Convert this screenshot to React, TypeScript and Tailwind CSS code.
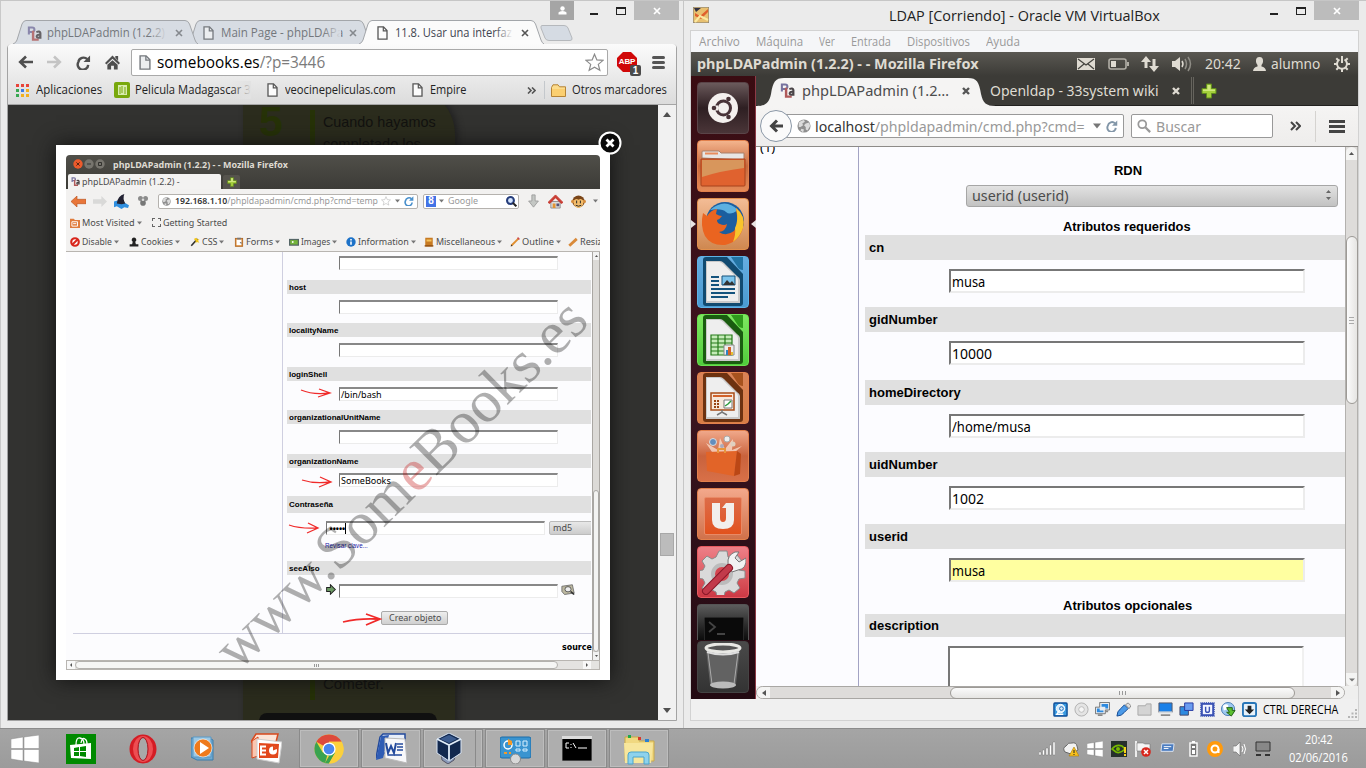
import React, { useLayoutEffect, useRef } from "react";

type P = { className?: string; children?: React.ReactNode };

/* Single-line label that stretches horizontally to fill the width of its box. */
function T({ className = "", children }: P) {
  const outer = useRef<HTMLSpanElement>(null);
  const inner = useRef<HTMLSpanElement>(null);
  useLayoutEffect(() => {
    const o = outer.current;
    const i = inner.current;
    if (!o || !i) return;
    i.style.transform = "";
    i.style.transform = `scaleX(${o.clientWidth / i.offsetWidth})`;
  }, [children]);
  return (
    <span ref={outer} className={`block shrink-0 whitespace-nowrap ${className}`}>
      <span ref={inner} className="inline-block origin-left">{children}</span>
    </span>
  );
}

function I({ className = "", vb = "0 0 16 16", children }: P & { vb?: string }) {
  return (
    <svg className={`block shrink-0 ${className}`} viewBox={vb} fill="none" preserveAspectRatio="none">
      {children}
    </svg>
  );
}

const segoe = "font-['Open_Sans','Noto_Sans',sans-serif]";
const ubuntu = "font-['Noto_Sans','Open_Sans',sans-serif]";
const arial = "font-['Liberation_Sans',Arial,sans-serif]";

const Pla = ({ className = "" }: P) => (
  <I className={className}>
    <path d="M2 9V1.500h3.500a2.200 2.200 0 010 4.800H2" stroke="#77739f" strokeWidth="2.200" />
    <path d="M6.500 5v9.500h6" stroke="#b05a5a" strokeWidth="2.600" />
    <path d="M10 6.500q3.700-1.500 4.300 1V13.500M14 9.500c-4.500-.8-4.500 3-2 3 1 0 2-.5 2-1.500" stroke="#4b4548" strokeWidth="2.200" />
  </I>
);
const FileI = ({ className = "", dim = false }: P & { dim?: boolean }) => (
  <I className={className} vb="0 0 11 14">
    <path d="M1 .8h5.500L10 4.500v8.700H1z" fill={dim ? "#eceef0" : "#fcfcfc"} stroke={dim ? "#75797e" : "#555"} strokeWidth="1.300" />
    <path d="M6.300 1v3.800H10" stroke={dim ? "#75797e" : "#555"} strokeWidth="1.200" />
  </I>
);
const XI = ({ className = "", c = "#777", w = 2 }: P & { c?: string; w?: number }) => (
  <I className={className} vb="0 0 8 8">
    <path d="M1 1l6 6M7 1L1 7" stroke={c} strokeWidth={w} />
  </I>
);
const Down = ({ className = "" }: P) => (
  <I className={className} vb="0 0 6 5"><path d="M0 .5h6L3 4.500z" fill="#777" /></I>
);
const Plus = ({ className = "" }: P) => (
  <I className={className}>
    <path d="M5.500 1h5v4.500H15v5h-4.500V15h-5v-4.500H1v-5h4.500z" fill="#a5cf3c" stroke="#5f8a1c" />
    <path d="M6.500 2h3v4.500H14v1.500H2V6.500h4.500z" fill="#cfe87c" />
  </I>
);
const Globe = ({ className = "" }: P) => (
  <I className={className}>
    <circle cx="8" cy="8" r="7.500" fill="#8f8f8f" />
    <path d="M2 4q3-3 6-3l1 2-3 2 1 2-3 2-2 0zM10 5l4-1 1 4-3 5-2-1 0-3-2-2zM5 11l3 1-1 3-3-2z" fill="#dcdcdc" />
  </I>
);
const Reload = ({ className = "", c = "#555" }: P & { c?: string }) => (
  <I className={className}>
    <path d="M13 10.500A5.600 5.600 0 112.500 7.500 5.600 5.600 0 0112 4.500" stroke={c} strokeWidth="2.600" />
    <path d="M15 .5v7H8z" fill={c} />
  </I>
);

function ChromeTab({ className = "", active = false, icon, children }: P & { active?: boolean; icon: React.ReactNode }) {
  return (
    <div className={`relative flex h-[24px] w-[185px] shrink-0 items-center pt-[2px] ${className}`}>
      <svg className="absolute inset-0 h-[24px] w-[185px]" viewBox="0 0 185 24" fill="none">
        <path
          d="M0 24Q3 23 4 20L9 4Q10.500.5 13 .5H172Q175 .5 176.500 4L182 20Q183 23 185 24"
          fill={active ? "#fbfbfb" : "#d7dce3"}
          stroke="#a3a6aa"
        />
      </svg>
      {icon}
      {children}
      <div className={`absolute left-[136px] top-[3px] h-[20px] w-[18px] bg-linear-to-r ${active ? "from-[#fbfbfb00] to-[#fbfbfb]" : "from-[#d7dce300] to-[#d7dce3]"}`} />
      <XI className="absolute left-[162px] top-[9px] size-[8px]" c={active ? "#555" : "#85898e"} w={1.600} />
    </div>
  );
}

function ChromeTop() {
  return (
    <>
      <div className="flex h-[19px] items-start justify-end pr-[4px]">
        <div className="flex h-[19px] w-[24px] items-center justify-center bg-[#a5a5a5]">
          <I className="size-[9px]" vb="0 0 9 9"><circle cx="4.500" cy="2.500" r="2.200" fill="#fff" /><path d="M.5 8.500v-2q1-1.500 4-1.500t4 1.500v2z" fill="#fff" /></I>
        </div>
        <div className="ml-[16px] mt-[12px] h-[2px] w-[8px] bg-[#222]" />
        <div className="ml-[18px] mt-[6px] h-[8px] w-[10px] border border-t-2 border-[#222]" />
        <div className="ml-[8px] flex h-[19px] w-[45px] items-center justify-center bg-[#bcbcbc]"><XI className="size-[8px]" c="#fff" w={1.700} /></div>
      </div>
      <div className="flex h-[24px] pl-[13px] text-[13px] text-[#73777c]">
        <ChromeTab className="z-10" icon={<Pla className="relative ml-[14px] size-[15px] opacity-80" />}><T className="relative ml-[5px] w-[118px]">phpLDAPadmin (1.2.2)</T></ChromeTab>
        <ChromeTab className="-ml-[11px]" icon={<FileI dim className="relative ml-[16px] h-[14px] w-[11px]" />}><T className="relative ml-[7px] w-[122px]">Main Page - phpLDAPa</T></ChromeTab>
        <ChromeTab active className="z-20 -ml-[13px] text-[#3e4450]" icon={<FileI className="relative ml-[18px] h-[14px] w-[11px]" />}><T className="relative ml-[7px] w-[117px]">11.8. Usar una interfaz</T></ChromeTab>
        <svg className="-ml-[4px] mt-[5px] h-[16px] w-[33px]" viewBox="0 0 33 16" fill="none"><path d="M2 .5H24Q27 .5 28 3L32 13Q32.500 15.500 30 15.500H9Q6 15.500 5 13L1 3Q.5 .5 2 .5" fill="#d5dbe3" stroke="#b5b8bc" /></svg>
      </div>
    </>
  );
}

function ChromeBars() {
  return (
    <div className="flex h-[61px] flex-col rounded-t-[3px] border-b border-[#a5a5a5] bg-linear-to-b from-[#fbfbfb] to-[#dcdcdc]">
      <div className="flex h-[36px] items-center pl-[10px]">
        <I className="h-[14px] w-[15px]" vb="0 0 15 14"><path d="M15 7H3M8 1.500L2.200 7 8 12.500" stroke="#4f4f4f" strokeWidth="2.600" /></I>
        <I className="ml-[14px] h-[14px] w-[15px]" vb="0 0 15 14"><path d="M0 7h12M7 1.500L12.800 7 7 12.500" stroke="#c4c4c4" strokeWidth="2.600" /></I>
        <Reload className="ml-[14px] size-[15px]" c="#4f4f4f" />
        <I className="ml-[14px] size-[15px]"><path d="M8 .5L16 8.500 14.500 10 8 4 1.500 10 0 8.500zM11 1h3v5l-3-3zM2.500 10.500L8 5.500l5.500 5V15.500H9.500v-4h-3v4h-4z" fill="#4f4f4f" /></I>
        <div className="ml-[11px] flex h-[27px] w-[477px] shrink-0 items-center rounded-[2px] border border-[#a9a9a9] bg-white">
          <FileI dim className="ml-[7px] h-[15px] w-[12px]" />
          <T className="ml-[6px] w-[168px] text-[17px] text-black">somebooks.es<span className="text-[#7b7b7b]">/?p=3446</span></T>
          <I className="ml-[260px] size-[19px]"><path d="M8 1l2 4.800 5.200.4-4 3.400 1.300 5L8 11.900 3.500 14.600l1.300-5-4-3.400L6 5.800z" fill="#fff" stroke="#8b8b8b" /></I>
        </div>
        <div className="relative ml-[9px] size-[20px] shrink-0">
          <I className="size-[20px]" vb="0 0 20 20"><path d="M6 0h8l6 6v8l-6 6H6l-6-6V6z" fill="#d00808" /></I>
          <span className={`absolute inset-0 flex items-center justify-center ${arial} text-[8px] font-bold tracking-tight text-white`}>ABP</span>
          <span className={`absolute left-[13px] top-[13px] flex h-[11px] w-[11px] items-center justify-center rounded-[2px] bg-[#4a4a4a] ${arial} text-[10px] font-bold text-white`}>1</span>
        </div>
        <div className="ml-[15px] flex flex-col gap-[2px]">
          <div className="h-[3px] w-[13px] rounded-sm bg-[#555]" /><div className="h-[3px] w-[13px] rounded-sm bg-[#555]" /><div className="h-[3px] w-[13px] rounded-sm bg-[#555]" />
        </div>
      </div>
      <div className="flex h-[20px] items-center pl-[8px] text-[12.500px] text-[#222]">
        <I className="size-[13px]" vb="0 0 13 13">
          <path d="M0 0h3v3H0zM10 0h3v3h-3zM5 0h3v3H5z" fill="#e8443a" /><path d="M0 5h3v3H0zM0 10h3v3H0z" fill="#39a852" /><path d="M5 5h3v3H5z" fill="#3c7de6" /><path d="M10 5h3v3h-3zM10 10h3v3h-3zM5 10h3v3H5z" fill="#f2b01e" />
        </I>
        <T className="ml-[7px] w-[66px]">Aplicaciones</T>
        <I className="ml-[12px] size-[16px]"><rect width="16" height="16" rx="2" fill="#78a80c" /><path d="M4 3h9v10H4z" fill="#d8ecae" /><path d="M6 5v7M8 4v7M11 5v7M2 3v10" stroke="#78a80c" /></I>
        <div className="relative ml-[5px]"><T className="w-[116px]">Pelicula Madagascar 3</T><div className="absolute right-0 top-0 h-full w-[20px] bg-linear-to-r from-[#e2e2e200] to-[#e2e2e2]" /></div>
        <FileI className="ml-[16px] h-[14px] w-[11px]" />
        <T className="ml-[7px] w-[111px]">veocinepeliculas.com</T>
        <FileI className="ml-[16px] h-[14px] w-[11px]" />
        <T className="ml-[7px] w-[36px]">Empire</T>
        <I className="ml-[61px] h-[7px] w-[9px]" vb="0 0 9 7"><path d="M1 .5l3 3-3 3M5 .5l3 3-3 3" stroke="#555" strokeWidth="1.600" /></I>
        <div className="ml-[8px] h-[18px] w-px bg-[#c4c8cc]" />
        <I className="ml-[6px] h-[13px] w-[15px]" vb="0 0 15 13"><path d="M.5 12.500V3.500L2 .8h5l1.500 2H14.500v9.700z" fill="#fcdc8c" stroke="#b58436" /><path d="M1 5h13v7H1z" fill="#fbcf70" /></I>
        <T className="ml-[6px] w-[95px]">Otros marcadores</T>
      </div>
    </div>
  );
}

/* ---------- picture shown in the lightbox ---------- */

function Field({ gap, label, mt, value, tall }: { gap: string; label: string; mt: string; value?: string; tall?: boolean }) {
  return (
    <>
      <div className={`${gap} ${tall ? "h-[17px]" : "h-[14px] pt-[2px]"} flex w-[304px] shrink-0 items-center bg-[#e0e0e0] pl-[2px] ${arial} text-[8px] font-bold text-black`}>{label}</div>
      {mt && <MiniInput className={`ml-[52px] ${mt}`}>{value}</MiniInput>}
    </>
  );
}
function MiniInput({ className = "", children }: P) {
  return (
    <div className={`flex h-[14px] w-[219px] shrink-0 items-center border border-[#ececec] border-l-[#777] border-t-2 border-t-[#888] bg-white pl-px text-[9px] leading-none text-black ${className}`}>
      {children}
    </div>
  );
}
const dev: [string, string, string, React.ReactNode][] = [
  ["Disable", "w-[30px]", "w-[59px]", <g key="a"><circle cx="8" cy="8" r="6" stroke="#d8261c" strokeWidth="3.500" fill="#fff" /><path d="M12 4L4 12" stroke="#d8261c" strokeWidth="3" /></g>],
  ["Cookies", "w-[32px]", "w-[61px]", <path key="b" d="M8 1a3.500 3.500 0 012 6.500l1 4H15V15H1v-3.500h4l1-4A3.500 3.500 0 018 1z" fill="#222" />],
  ["CSS", "w-[15px]", "w-[44px]", <g key="c"><path d="M2 14L12 3" stroke="#333" strokeWidth="2.500" /><path d="M10 1l2 3 3-1-2 3 2 3-4-1-2 2V6L6 3z" fill="#f0c419" /></g>],
  ["Forms", "w-[27px]", "w-[55px]", <g key="d"><rect x="2" y="2" width="12" height="13" fill="#d9822b" stroke="#a55a14" /><path d="M4 4h8v9H4z" fill="#fff" /><path d="M5 1h6v3H5zM9 8h3v4z" fill="#777" /></g>],
  ["Images", "w-[29px]", "w-[57px]", <g key="e"><rect y="3" width="16" height="11" fill="#566" /><rect x="2" y="5" width="12" height="7" fill="#74b43a" /><circle cx="6" cy="8" r="1.500" fill="#fff" /></g>],
  ["Information", "w-[51px]", "w-[78px]", <g key="f"><circle cx="8" cy="8" r="7.500" fill="#1d72c8" /><path d="M8 7v5.500M8 3v2.500" stroke="#fff" strokeWidth="2.500" /></g>],
  ["Miscellaneous", "w-[59px]", "w-[86px]", <g key="g"><path d="M2 1h12v14H2z" fill="#c77a22" /><path d="M4 4h8v3H4z" fill="#f5c25b" /><path d="M1 13h14v2H1z" fill="#8a4b12" /></g>],
  ["Outline", "w-[32px]", "w-[58px]", <g key="h"><path d="M2 14L13 3" stroke="#e08e2e" strokeWidth="3" /><path d="M12 1l3 3" stroke="#cc4a4a" strokeWidth="2.500" /><path d="M1 15l1-3 2 2z" fill="#333" /></g>],
  ["Resize", "w-[27px]", "w-[60px]", <path key="i" d="M2 14L14 3" stroke="#d98a3a" strokeWidth="4.500" />],
];

function Shot() {
  return (
    <div className={`relative flex h-[515px] w-[534px] flex-col overflow-hidden rounded-t-[4px] bg-[#fcfcfe] ${ubuntu} text-[9.500px] leading-none text-[#4c4c4c]`}>
      <div className="h-[34px] shrink-0 bg-linear-to-b from-[#504f49] to-[#3c3b37]">
        <div className="flex h-[18px] items-center gap-[1px] pl-[7px]">
          <I className="size-[10px]" vb="0 0 10 10"><circle cx="5" cy="5" r="4.700" fill="#ec5a2c" /><path d="M3.400 3.400l3.200 3.200m0-3.200L3.400 6.600" stroke="#5a2410" /></I>
          <I className="size-[10px]" vb="0 0 10 10"><circle cx="5" cy="5" r="4.700" fill="#77756e" /><path d="M3 5h4" stroke="#33322e" /></I>
          <I className="size-[10px]" vb="0 0 10 10"><circle cx="5" cy="5" r="4.700" fill="#77756e" /><path d="M3.500 3.500h3v3h-3z" stroke="#33322e" /></I>
          <T className="ml-[7px] w-[175px] text-[9px] font-bold text-[#dfdbd2]">phpLDAPadmin (1.2.2) - - Mozilla Firefox</T>
        </div>
        <div className="flex h-[16px] items-end gap-[2px] pl-[2px]">
          <div className="flex h-[15px] w-[153px] items-center rounded-t-[2px] bg-[#f3f2f1] pl-[3px]"><Pla className="size-[9px]" /><T className="ml-[2px] w-[98px]">phpLDAPadmin (1.2.2) -</T></div>
          <div className="flex h-[14px] w-[17px] items-center justify-center rounded-t-[2px] bg-[#55534d]"><Plus className="size-[10px]" /></div>
        </div>
      </div>
      <div className="flex h-[24px] shrink-0 items-center bg-[#f2f1f0] pl-[5px]">
        <I className="h-[11px] w-[15px]" vb="0 0 15 10"><path d="M0 5l6-5v3h9v4H6v3z" fill="#e8763a" stroke="#b9511c" strokeWidth=".6" /></I>
        <I className="ml-[7px] h-[11px] w-[14px]" vb="0 0 15 10"><path d="M15 5L9 0v3H0v4h9v3z" fill="#d9d9d8" /></I>
        <I className="ml-[7px] size-[15px]"><path d="M0 8l4-1 4 3 3-1 5 3-1 3-4-1-3 2-5-3-3 1z" fill="#2f8fe0" /><path d="M3 10Q4 2 11 0q-2 5 1 10l-4 1z" fill="#223" /></I>
        <I className="ml-[9px] size-[10px]"><circle cx="4" cy="4" r="4" fill="#8b8b8b" /><circle cx="12" cy="4" r="4" fill="#8b8b8b" /><circle cx="8" cy="11" r="4.500" fill="#777" /><circle cx="8" cy="6" r="2" fill="#ddd" /></I>
        <div className="ml-[10px] flex h-[15px] w-[260px] shrink-0 items-center rounded-[2px] border border-[#b5b2ae] bg-white">
          <Globe className="ml-[3px] size-[9px]" />
          <T className="ml-[4px] w-[203px] text-[#999]"><b className="font-semibold text-[#333]">192.168.1.10</b>/phpldapadmin/cmd.php?cmd=temp</T>
          <I className="ml-[3px] size-[10px]"><path d="M8 1l2 4.800 5.200.4-4 3.400 1.300 5L8 11.900 3.500 14.600l1.300-5-4-3.400L6 5.800z" stroke="#bbb" /></I>
          <Down className="ml-[4px] h-[4px] w-[5px]" />
          <Reload className="ml-[4px] size-[10px]" c="#4a90cc" />
        </div>
        <div className="ml-[5px] flex h-[15px] w-[96px] shrink-0 items-center rounded-[2px] border border-[#b5b2ae] bg-white">
          <div className={`flex h-[11px] w-[10px] items-center justify-center bg-[#4373e6] ${arial} ml-[2px] text-[10px] font-bold text-white`}>8</div>
          <Down className="ml-[3px] h-[4px] w-[5px]" />
          <T className="ml-[4px] w-[30px] text-[#999]">Google</T>
          <I className="ml-[28px] size-[11px]"><circle cx="6.500" cy="6.500" r="5" fill="#d5e6ff" stroke="#253c7a" strokeWidth="3" /><path d="M10 10l5 5" stroke="#222" strokeWidth="3" /></I>
        </div>
        <I className="ml-[8px] h-[14px] w-[13px]"><path d="M6 1h4v7h4l-6 7-6-7h4z" fill="#c4c7c4" stroke="#999" /></I>
        <I className="ml-[8px] size-[15px]"><path d="M3 8h10v7H3z" fill="#ddd" stroke="#555" strokeWidth=".6" /><path d="M0 9l8-8 8 8-2 1-6-6-6 6z" fill="#c93c32" stroke="#c93c32" /><path d="M5 10h3v5H5z" fill="#e39433" /><path d="M9 10h3v3H9z" fill="#557" /></I>
        <I className="ml-[8px] size-[15px]"><circle cx="8" cy="8" r="6.500" fill="#7a4518" /><circle cx="1.800" cy="8" r="1.800" fill="#d68c3c" /><circle cx="14.200" cy="8" r="1.800" fill="#d68c3c" /><path d="M3 7q2-3 5-1 3-2 5 1v4q-2 4-5 4t-5-4z" fill="#f3bd6c" /><path d="M6 7v3M10 7v3M5 12q3 2 6 0" stroke="#222" /></I>
        <Down className="ml-[7px] h-[4px] w-[5px]" />
      </div>
      <div className="flex h-[19px] shrink-0 items-center bg-[#f2f1f0] pl-[4px]">
        <I className="size-[10px]"><path d="M0 1h6l2 2h8v13H0z" fill="#e07c3c" /><path d="M3 6h9v7H3zM5 9h5" stroke="#fff" strokeWidth="1.500" /></I>
        <T className="ml-[2px] w-[53px]">Most Visited</T><Down className="ml-[2px] h-[4px] w-[5px]" />
        <div className="ml-[10px] size-[9px] border border-dashed border-[#666]" /><T className="ml-[2px] w-[64px]">Getting Started</T>
      </div>
      <div className="flex h-[20px] shrink-0 items-center border-b border-[#b8b5b1] bg-[#f2f1f0] pl-[4px]">
        {dev.map(([name, w, total, icon]) => (
          <div key={name} className={`flex shrink-0 items-center ${total}`}><I className="size-[10px]">{icon}</I><T className={`ml-[2px] ${w}`}>{name}</T><Down className="ml-[2px] h-[4px] w-[5px]" /></div>
        ))}
      </div>
      <div className="flex h-[408px] shrink-0">
        <div className="flex min-w-0 flex-1 flex-col">
          <div className="ml-[7px] flex h-[382px] shrink-0 border-b border-[#cfcfe0]">
            <div className="w-[210px] shrink-0 border-r border-[#cfcfe0]" />
            <div className="flex w-[308px] flex-col overflow-hidden pl-[4px]">
              <MiniInput className="ml-[52px] mt-[4px]" />
              <Field gap="mt-[10px]" label="host" mt="mt-[6px]" />
              <Field gap="mt-[9px]" label="localityName" mt="mt-[6px]" />
              <Field gap="mt-[10px]" label="loginShell" mt="mt-[6px]" value="/bin/bash" />
              <Field gap="mt-[9px]" label="organizationalUnitName" mt="mt-[6px]" />
              <Field gap="mt-[10px]" label="organizationName" mt="mt-[5px]" value="SomeBooks" />
              <Field gap="mt-[9px]" label="Contraseña" mt="" tall />
              <div className="ml-[39px] mt-[8px] flex">
                <MiniInput><span className="border-r border-black pl-px text-[11px] tracking-[-1px]">•••••</span></MiniInput>
                <div className="ml-[4px] flex h-[14px] w-[48px] shrink-0 items-center rounded-[2px] border border-[#bbb] bg-linear-to-b from-[#e8e8e8] to-[#ccc] pl-[3px]"><T className="w-[19px]">md5</T></div>
              </div>
              <T className={`ml-[38px] mt-[7px] w-[43px] ${arial} text-[7px] text-[#1a1aa6]`}>Revisar clave...</T>
              <Field gap="mt-[12px]" label="seeAlso" mt="" />
              <div className="mt-[6px] flex items-center pl-[39px]">
                <I className="h-[11px] w-[10px]"><path d="M1 5h6V1l8 7-8 7v-4H1z" fill="#6c9a64" stroke="#222" strokeWidth="1.500" /></I>
                <MiniInput className="mx-[3px] mt-[3px]" />
                <I className="h-[12px] w-[14px]"><path d="M1 3l12-2 2 11-11 2-3-4z" fill="#bcb8a0" stroke="#666" /><circle cx="8" cy="7" r="3.500" fill="#eee" stroke="#444" /><path d="M11 10l4 4" stroke="#333" strokeWidth="2" /></I>
              </div>
              <div className="ml-[94px] mt-[13px] flex h-[14px] w-[67px] shrink-0 items-center justify-center rounded-[2px] border border-[#aaa] bg-linear-to-b from-[#eee] to-[#d0d0d0]"><T className="w-[52px]">Crear objeto</T></div>
            </div>
          </div>
          <T className="ml-[496px] mt-[9px] w-[30px] font-['DejaVu_Sans',sans-serif] text-[9px] font-bold text-black">source</T>
        </div>
        <div className="flex w-[8px] shrink-0 flex-col border-x border-[#aaa7a3] bg-[#dcdad7]"><div className="flex h-[8px] shrink-0 items-center justify-center bg-[#f2f2f2]"><I className="h-[2px] w-[3px]" vb="0 0 6 4"><path d="M0 4l3-4 3 4z" fill="#555" /></I></div><div className="mt-[230px] h-[162px] shrink-0 rounded-full border border-[#a9a7a4] bg-[#f3f3f2]" /><div className="flex flex-1 items-center justify-center bg-[#f2f2f2]"><I className="h-[2px] w-[3px]" vb="0 0 6 4"><path d="M0 0l3 4 3-4z" fill="#555" /></I></div></div>
      </div>
      <div className="flex h-[10px] shrink-0 items-center border border-[#b8b5b1] bg-[#e4e3e1]">
        <div className="flex size-[8px] items-center justify-center bg-[#f8f8f8]"><I className="h-[4px] w-[2px]" vb="0 0 4 6"><path d="M4 0v6L0 3z" fill="#555" /></I></div>
        <div className="flex h-[8px] w-[483px] items-center justify-center gap-px rounded-full border border-[#b3b1ae] bg-[#f6f6f5]"><i className="h-[3px] w-px bg-[#999]" /><i className="h-[3px] w-px bg-[#999]" /><i className="h-[3px] w-px bg-[#999]" /></div>
        <div className="ml-[25px] flex size-[8px] items-center justify-center bg-[#f8f8f8]"><I className="h-[4px] w-[2px]" vb="0 0 4 6"><path d="M0 0v6l4-3z" fill="#555" /></I></div>
      </div>
      <svg className="absolute inset-0 h-[515px] w-[534px]" viewBox="0 0 534 515" fill="none" stroke="#f02a2a" strokeWidth="1.300">
        <path d="M235 235q12 5 28 3M253 234l11 4-12 4" /><path d="M236 325q12 4 28 2M254 322l11 5-12 5" /><path d="M223 370q12 4 28 3M242 368l10 5-11 5" /><path d="M277 467q16-4 35-3M300 459l14 5-14 6" strokeWidth="1.800" />
      </svg>
      <div className="absolute left-[177px] top-[468px] origin-bottom-left -rotate-[44.700deg] whitespace-nowrap font-['Liberation_Serif',serif] text-[60px] leading-[54px] text-[#00000050]">www.Som<span className="text-[#c0000050]">e</span>Books.es</div>
    </div>
  );
}

function Chrome() {
  return (
    <div className={`flex w-[683px] shrink-0 flex-col border-t border-[#c6c6c6] bg-[#ebebeb] ${segoe}`}>
      <div className="flex h-full flex-col border-l border-[#c9c9c9]">
        <div className="-ml-px"><ChromeTop /></div>
        <div className="ml-[6px] flex h-[677px] w-[670px] flex-col rounded-t-[4px] border border-[#a3a3a3]">
          <div className="-mt-px"><ChromeBars /></div>
          <div className="flex min-h-0 flex-1">
            <div className={`relative w-[650px] shrink-0 overflow-hidden bg-[#323230] ${arial}`}>
              <div className="absolute -top-[20px] left-[235px] h-[640px] w-[212px] rounded-tr-[50px] bg-[#2b2c1d] shadow-[3px_0_6px_#222]">
                <div className="absolute left-[16px] top-[11px] text-[43px] font-bold leading-[50px] text-[#263207]">5</div>
                <div className="absolute left-[67px] top-[25px] h-[590px] w-[5px] bg-[#263207]" />
                <div className="absolute left-[80px] top-[26px] text-[15px] leading-[22px] text-[#121210]"><T className="w-[113px]">Cuando hayamos</T><T className="w-[98px]">completado los</T></div>
                <div className="absolute left-[80px] top-[590px] text-[15px] leading-[18px] text-[#121210]">Cometer.</div>
                <div className="absolute left-[16px] top-[628px] h-[20px] w-[178px] rounded-t-[8px] bg-[#101010]" />
              </div>
              <div className="absolute left-[48px] top-[40px] h-[535px] w-[554px] bg-white p-[10px] shadow-[0_0_20px_#111]"><Shot /></div>
              <I className="absolute left-[590px] top-[26px] size-[24px]" vb="0 0 24 24"><circle cx="12" cy="12" r="10.500" fill="#0a0a0a" stroke="#fff" strokeWidth="2" /><path d="M8.500 8.500l7 7m0-7l-7 7" stroke="#fff" strokeWidth="2.800" /></I>
            </div>
            <div className="flex flex-1 flex-col items-center bg-[#f1f1f1]">
              <I className="mt-[7px] h-[5px] w-[8px]" vb="0 0 8 5"><path d="M0 5l4-5 4 5z" fill="#505050" /></I>
              <div className="mt-[416px] h-[23px] w-[14px] border border-[#a8a8a8] bg-[#bcbcbc]" />
              <I className="mb-[7px] mt-auto h-[5px] w-[8px]" vb="0 0 8 5"><path d="M0 0l4 5 4-5z" fill="#505050" /></I>
            </div>
          </div>
        </div>
      </div>
    </div>
  );
}

/* ---------- virtual machine window ---------- */

const tile = "relative flex h-[52px] w-[52px] shrink-0 items-center justify-center rounded-[4px] border";
const Office = ({ d, l, children }: { d: string; l: string; children: React.ReactNode }) => (
  <I className="size-[50px]" vb="0 0 50 50">
    <path d="M5 3q0-3 3-3h21l16 17v29q0 3-3 3H8q-3 0-3-3z" fill={d} />
    <path d="M33 0h12v13q-4 0-6-4z" fill={l} />
    <path d="M8 4h14q2 0 4 2l13 13q3 2 3 4v23H8z" fill="#c9c9c9" /><path d="M9 5h12q2 0 4 2l12 12q3 2 3 4v21H9z" fill="#eeeeee" />
    {children}
  </I>
);

function Launcher() {
  return (
    <div className="flex h-[623px] w-[65px] shrink-0 flex-col items-center border-r border-[#8d3a46] bg-linear-to-b from-[#3a0c12] via-[#3c1520] to-[#230a12] pr-[1px] pt-[6px]">
      <div className="flex h-[558px] flex-col gap-[6px]">
        <div className={`${tile} border-[#5a4448] bg-linear-to-b from-[#6b5a5c] via-[#2e1f22] to-[#4a3538]`}>
          <I className="size-[32px]" vb="0 0 32 32"><circle cx="16" cy="16" r="15" fill="#f4f0ee" /><circle cx="16.500" cy="16" r="7" stroke="#493338" strokeWidth="3" /><path d="M6 16h5M21 9l2-4M21 23l2 4" stroke="#f4f0ee" strokeWidth="5" /><circle cx="7" cy="16" r="2.300" fill="#493338" /><circle cx="21.500" cy="7" r="2.300" fill="#493338" /><circle cx="21.500" cy="25" r="2.300" fill="#493338" /></I>
        </div>
        <div className={`${tile} border-[#e2804c] bg-linear-to-b from-[#f3b48d] via-[#c7683c] to-[#e58a57]`}>
          <I className="size-[46px]" vb="0 0 46 46"><path d="M2 15V9q0-1 1-1h16l2 2h23v7z" fill="#e8e6e4" stroke="#a9806a" /><path d="M5 10.500h13" stroke="#e88c5c" strokeWidth="2" /><path d="M1 16h44v26q0 1-1 1H2q-1 0-1-1z" fill="#e0622f" stroke="#a8431c" /><path d="M2 17h42v8Q20 28 2 34z" fill="#d8965c" /></I>
        </div>
        <div className={`${tile} border-[#e2904c] bg-linear-to-b from-[#f3bc95] to-[#cf8850]`}>
          <I className="size-[46px]" vb="0 0 46 46"><circle cx="25" cy="20" r="19" fill="#1b5e9f" /><path d="M10 9Q25-4 38 9q-8 6-12 2T10 9z" fill="#5cb0e0" /><path d="M36 7q10 8 7 20-4 14-18 17-14 1-20-9Q0 25 3 12l4 3q4-6 10-7l-1 5q3 2 6 2-2 3-5 4 0 3 3 4 4 2 7 0-1 7-8 8 7 5 15-1 5-6 2-23z" fill="#ea6420" /><path d="M36 7q10 8 7 20-3 9-10 14 3-8 2-14 4-8 1-20z" fill="#f8c42c" /></I>
          <I className="absolute -left-[7px] top-[20px] h-[10px] w-[6px]" vb="0 0 6 10"><path d="M0 1l5 4-5 4z" fill="#e8e4e4" /></I>
          <I className="absolute left-[52px] top-[20px] h-[10px] w-[6px]" vb="0 0 6 10"><path d="M6 1L1 5l5 4z" fill="#e8e4e4" /></I>
        </div>
        <div className={`${tile} border-[#5db3e6] bg-linear-to-b from-[#66ade0] to-[#4a9ad2]`}>
          <Office d="#114a70" l="#2273a3"><path d="M13 20h8M13 24h8M13 28h8M13 32h24M13 36h24M13 40h17" stroke="#14537d" strokeWidth="2" /><path d="M24 19h13v9H24z" fill="#7cc4ec" stroke="#14537d" /><path d="M25 28l4-5 3 3 2-2 3 4z" fill="#333" /></Office>
        </div>
        <div className={`${tile} border-[#6be050] bg-linear-to-b from-[#7ee860] to-[#50cc3c]`}>
          <Office d="#1a5c10" l="#2f9a1c"><path d="M13 20h21v20H13z" fill="#c5ebb8" /><path d="M13 20h21v20H13zM13 24h21M13 28h21M13 32h21M13 36h21M20 20v20M27 20v20" stroke="#247a18" strokeWidth="1.200" /><path d="M26 30h10v10H26z" fill="#eee" stroke="#888" /><path d="M28 35h2v5h-2z" fill="#2d83c4" /><path d="M30 32h3v8h-3z" fill="#d2622a" /><path d="M33 37h2v3h-2z" fill="#e8c030" /></Office>
        </div>
        <div className={`${tile} border-[#e2804c] bg-linear-to-b from-[#d98358] to-[#d87e46]`}>
          <Office d="#6d3210" l="#a6521e"><path d="M13 20h23v17H13z" fill="#f6e8dc" stroke="#a84c18" strokeWidth="1.500" /><path d="M15 23h19" stroke="#d2622a" strokeWidth="2" /><path d="M16 28h6M16 31h6M16 34h6" stroke="#9a4414" strokeWidth="2" strokeDasharray="2 1" /><path d="M26 27h8v8h-8z" fill="#fff" stroke="#777" /><path d="M27 33l3-2 3-3" stroke="#2a9a3a" strokeWidth="1.500" /><path d="M24 37v3M19 42l5-3 5 3" stroke="#777" strokeWidth="1.500" /></Office>
        </div>
        <div className={`${tile} border-[#e2804c] bg-linear-to-b from-[#f0a88a] via-[#c9623c] to-[#d87048]`}>
          <I className="size-[46px]" vb="0 0 46 46"><path d="M12 19L6 10l12 7 2-12 5 11 8-10-1 11 10-4-7 6z" fill="#ffe8d8" opacity=".7" /><circle cx="13" cy="9" r="3.500" fill="#638ebd" stroke="#ddd" /><circle cx="27" cy="6" r="3" fill="#eee" stroke="#aaa" /><circle cx="33" cy="11" r="2.500" fill="#e0d0c0" /><circle cx="22" cy="13" r="2" fill="#aab" /><path d="M6 19l31-1-3 25-27-5z" fill="#e26428" /><path d="M37 18l4 3-1 20-6 2z" fill="#bb4715" /><path d="M18 20v-4h7v4" stroke="#e8953c" strokeWidth="2" /></I>
        </div>
        <div className={`${tile} border-[#e2804c] bg-linear-to-b from-[#f3a88b] to-[#d0714a]`}>
          <div className="mt-[4px] flex size-[38px] items-center justify-center rounded-[2px] border border-[#e98a66] bg-linear-to-b from-[#dc6c48] to-[#e2521c]"><I className="h-[28px] w-[24px]" vb="0 0 24 28"><path d="M1 1h8v15q0 4 3 4t3-4V6h-4l4-5h8v17q0 9-11 9T1 18z" fill="#f2efec" /></I></div>
        </div>
        <div className={`${tile} border-[#e85a60] bg-linear-to-b from-[#ee8088] to-[#cc3844]`}>
          <I className="size-[46px]" vb="0 0 46 46"><path d="M19 2h8l1 6 4 2 5-4 5 6-4 5 1 4 6 1v7l-6 1-2 4 3 5-6 5-5-3-4 2-1 5h-7l-1-5-4-2-5 3-5-5 3-5-2-4-6-1v-7l6-1 2-4-3-5 5-5 5 3 4-2z" fill="#dadada" stroke="#8a8a8a" /><circle cx="22" cy="25" r="9" fill="#d54650" stroke="#bbb" strokeWidth="4" /><path d="M28 15q-1-9 7-12l4 0-4 6 4 4 7-4q1 11-8 12l-6 2z" fill="#f2f2f2" stroke="#777" /><path d="M6 42L29 19" stroke="#8a1828" strokeWidth="8" strokeLinecap="round" /><path d="M6 42L29 19" stroke="#c23a4a" strokeWidth="6" strokeLinecap="round" /></I>
        </div>
        <div className="relative h-[36px] w-[52px] shrink-0 overflow-hidden rounded-t-[4px] border border-b-0 border-[#555] bg-linear-to-b from-[#5c5c5c] to-[#0c0c0c] pl-[6px] pt-[12px]">
          <I className="h-[24px] w-[40px]" vb="0 0 40 24"><path d="M0 0h40v24H0z" fill="#0a0a0a" stroke="#444" /><path d="M5 5l6 5-6 5M13 17h8" stroke="#444" strokeWidth="1.800" /></I>
          <div />
        </div>
      </div>
      <div className="mt-px flex h-[52px] w-[52px] shrink-0 items-start justify-center rounded-[4px] border border-[#444] bg-linear-to-b from-[#4a4a4a] to-[#333]">
        <I className="mt-[1px] h-[46px] w-[38px]" vb="0 0 38 46"><path d="M2 6l4 35q13 7 26 0L36 6z" fill="#626262" /><path d="M4 10l4 31M34 10l-4 31" stroke="#aaa" /><ellipse cx="19" cy="42" rx="13" ry="3.500" fill="#bbb" /><ellipse cx="19" cy="5" rx="17" ry="4" fill="#555" stroke="#e8e8e4" strokeWidth="3" /><path d="M3 9q16 5 32 0" stroke="#ddd" strokeWidth="2" /></I>
      </div>
    </div>
  );
}

function Row({ label, gap, yellow }: { label: string; gap: string; yellow?: boolean }) {
  return (
    <>
      <div className={`${gap} flex h-[25px] shrink-0 items-center bg-[#e0e0e0] pl-[4px] ${arial} text-[13px] font-bold text-black`}>{label}</div>
      <div className={`ml-[84px] mt-[9px] flex h-[24px] w-[356px] shrink-0 items-center border-2 border-b-[#ececec] border-l-[#777] border-r-[#ececec] border-t-[#777] pl-[1px] text-[14px] text-black ${yellow ? "bg-[#ffffa0]" : "bg-white"}`}>
        {label === "cn" || label === "userid" ? <T className="w-[33px]">musa</T> : label === "gidNumber" ? <T className="w-[40px]">10000</T> : label === "uidNumber" ? <T className="w-[32px]">1002</T> : <T className="w-[79px]">/home/musa</T>}
      </div>
    </>
  );
}

function Firefox() {
  return (
    <div className="flex w-[602px] flex-col">
      <div className="relative flex h-[30px] shrink-0 items-center border-b border-[#22211f] bg-[#3c3b37] text-[15px] text-[#dfdbd2]">
        <svg className="absolute left-0 top-[1px] h-[29px] w-[242px]" viewBox="0 0 242 29"><path d="M0 29c10 0 13-3 15-12 2-12 4-16 13-16h184c9 0 11 4 13 16 2 9 5 12 15 12z" fill="#f5f4f3" /></svg>
        <Pla className="relative ml-[24px] size-[15px]" />
        <T className="relative ml-[7px] w-[147px] text-[#4c4c4c]">phpLDAPadmin (1.2…</T>
        <XI className="relative ml-[13px] size-[8px]" c="#555" w={2.400} />
        <T className="relative ml-[20px] w-[169px]">Openldap - 33system wiki</T>
        <XI className="ml-[13px] size-[8px]" c="#dfdbd2" w={2.400} />
        <div className="ml-[11px] h-[27px] w-[3px] border-x border-[#66645e]" />
        <Plus className="ml-[7px] size-[16px]" />
      </div>
      <div className="flex h-[41px] shrink-0 items-center border-b border-[#8d8b88] bg-linear-to-b from-[#f5f4f3] to-[#eeedec] pl-[4px] text-[15px]">
        <div className="z-10 flex size-[32px] shrink-0 items-center justify-center rounded-full border border-[#8a97a6] bg-[#fafafa]"><I className="size-[14px]" vb="0 0 14 14"><path d="M14 7H3M8 1.500L2.500 7 8 12.500" stroke="#444" strokeWidth="3" /></I></div>
        <div className="-ml-[8px] flex h-[24px] w-[340px] shrink-0 items-center rounded-[2px] border border-[#999] bg-white pl-[12px]">
          <Globe className="size-[14px]" />
          <T className="ml-[4px] w-[270px] text-[#999]"><span className="text-[#333]">localhost</span>/phpldapadmin/cmd.php?cmd=</T>
          <Down className="ml-[8px] h-[6px] w-[8px]" /><Reload className="ml-[5px] size-[12px]" c="#8296a8" />
        </div>
        <div className="ml-[7px] flex h-[24px] w-[142px] shrink-0 items-center rounded-[2px] border border-[#999] bg-white pl-[5px]">
          <I className="size-[14px]"><circle cx="6" cy="6" r="4.500" stroke="#999" strokeWidth="2" /><path d="M9.500 9.500L15 15" stroke="#999" strokeWidth="2.600" /></I><T className="ml-[5px] w-[45px] text-[#999]">Buscar</T>
        </div>
        <I className="ml-[17px] h-[10px] w-[11px]" vb="0 0 11 10"><path d="M1 1l4 4-4 4M6 1l4 4-4 4" stroke="#444" strokeWidth="2" /></I>
        <div className="ml-[14px] h-[31px] w-px bg-[#d5d3d0]" />
        <div className="ml-[13px] flex flex-col gap-[2px]"><div className="h-[3px] w-[16px] bg-[#444]" /><div className="h-[3px] w-[16px] bg-[#444]" /><div className="h-[3px] w-[16px] bg-[#444]" /></div>
      </div>
      <div className="flex h-[539px] shrink-0 bg-[#fcfcff]">
        <div className="w-[103px] shrink-0 overflow-hidden border-r border-[#a3a3c4] pl-[4px] text-black"><T className="-mt-[9px] w-[15px] text-[13px] leading-[18px]">(1)</T></div>
        <div className="flex w-[486px] shrink-0 flex-col overflow-hidden pl-[6px]">
          <div className={`ml-[84px] mt-[15px] flex h-[18px] shrink-0 items-center justify-center pr-[38px] ${arial} text-[13px] font-bold text-black`}>RDN</div>
          <div className="ml-[101px] mt-[5px] flex h-[22px] w-[372px] shrink-0 items-center rounded-[3px] border border-[#a6a6a6] bg-linear-to-b from-[#e2e2e2] to-[#c2c2c2] pb-[2px] pl-[5px] text-[14px] text-[#4c4c4c]">
            <T className="w-[97px]">userid (userid)</T>
            <I className="ml-auto mr-[5px] h-[12px] w-[7px]" vb="0 0 7 12"><path d="M1 4l2.500-3L6 4zM1 8l2.500 3L6 8z" fill="#666" /></I>
          </div>
          <div className={`ml-[198px] mt-[11px] h-[17px] shrink-0 ${arial} text-[13px] font-bold leading-[17px] text-black`}><T className="w-[128px]">Atributos requeridos</T></div>
          <Row label="cn" gap="" /><Row label="gidNumber" gap="mt-[14px]" /><Row label="homeDirectory" gap="mt-[15px]" /><Row label="uidNumber" gap="mt-[14px]" /><Row label="userid" gap="mt-[14px]" yellow />
          <div className={`ml-[198px] mt-[15px] h-[17px] shrink-0 ${arial} text-[13px] font-bold leading-[17px] text-black`}><T className="w-[129px]">Atributos opcionales</T></div>
          <div className={`flex h-[23px] shrink-0 items-center bg-[#e0e0e0] pl-[4px] ${arial} text-[13px] font-bold text-black`}>description</div>
          <div className="ml-[83px] mt-[9px] h-[60px] w-[356px] shrink-0 border-2 border-l-[#777] border-r-[#f0f0f0] border-t-[#777] bg-white" />
        </div>
        <div className="flex w-[13px] shrink-0 flex-col items-center border-x border-[#b3b1ae] bg-[#dedcda]">
          <div className="flex h-[13px] w-[11px] items-center justify-center rounded-t-full bg-[#f4f4f3]"><I className="h-[3px] w-[5px]" vb="0 0 6 4"><path d="M0 4l3-4 3 4z" fill="#555" /></I></div>
          <div className="mt-[76px] flex h-[168px] w-[12px] shrink-0 flex-col items-center justify-center gap-[2px] rounded-full border border-[#9d9a96] bg-linear-to-r from-[#fbfbfb] to-[#e6e5e3]"><i className="h-px w-[5px] bg-[#aaa]" /><i className="h-px w-[5px] bg-[#aaa]" /><i className="h-px w-[5px] bg-[#aaa]" /></div>
          <div className="mt-auto flex h-[13px] w-[11px] items-center justify-center rounded-b-full bg-[#f4f4f3]"><Down className="h-[4px] w-[6px]" /></div>
        </div>
      </div>
      <div className="flex h-[13px] shrink-0 bg-[#efefee]">
        <div className="flex w-[589px] items-center rounded-full border border-[#a9a7a4] bg-[#dedcda]">
          <div className="flex h-[11px] w-[13px] items-center justify-center rounded-l-full bg-[#f4f4f3]"><I className="h-[6px] w-[4px]" vb="0 0 4 6"><path d="M4 0v6L0 3z" fill="#555" /></I></div>
          <div className="ml-[180px] flex h-[12px] w-[345px] items-center justify-center gap-[2px] rounded-full border border-[#9d9a96] bg-linear-to-b from-[#fbfbfb] to-[#e6e5e3]"><i className="h-[4px] w-px bg-[#999]" /><i className="h-[4px] w-px bg-[#999]" /><i className="h-[4px] w-px bg-[#999]" /></div>
          <div className="ml-auto flex h-[11px] w-[13px] items-center justify-center rounded-r-full bg-[#f4f4f3]"><I className="h-[6px] w-[4px]" vb="0 0 4 6"><path d="M0 0v6l4-3z" fill="#555" /></I></div>
        </div>
      </div>
    </div>
  );
}

const statusIcons: React.ReactNode[] = [
  <g key="0"><rect x="1" y="1" width="14" height="14" rx="1" fill="#3a9ae0" stroke="#0e4e98" strokeWidth="1.500" /><circle cx="8" cy="7" r="4.500" fill="#d8ecfa" stroke="#fff" /><circle cx="9" cy="7" r="2" stroke="#1a68b8" /><path d="M7 9l-3 4h7" stroke="#fff" strokeWidth="1.500" /></g>,
  <g key="1"><circle cx="8" cy="8" r="7" fill="#e4e4e4" stroke="#b0b0b0" /><circle cx="8" cy="8" r="3" stroke="#bbb" fill="#f6f6f6" /></g>,
  <g key="2"><path d="M6 1h9v7H6zM1 6h9v6H1z" fill="#2d8ae0" stroke="#e8ecf0" strokeWidth="2" /><path d="M5 .5h10.500v8H11v4H.5v-7H5z" stroke="#555" strokeWidth=".8" /><path d="M3 14h5M11 10h3" stroke="#888" strokeWidth="2" /></g>,
  <g key="3"><path d="M1 15q0-5 4-8l4-4 4 4-4 4q-3 4-8 4z" fill="#4c9ae8" stroke="#14498f" /><path d="M10 3l3-2 3 3-2 3z" fill="#ddd" stroke="#888" /></g>,
  <path key="4" d="M1 14V4h8l1-2h5v12z" fill="#d4d4d4" stroke="#a8a8a8" />,
  <g key="5"><path d="M1 1h14v10H1z" fill="#1a80e8" stroke="#556" /><path d="M1 10h14v2H1z" fill="#d4d8dc" /><path d="M3 14h10" stroke="#888" strokeWidth="1.800" /></g>,
  <g key="6"><path d="M1 5h9v9H1z" fill="#2d8ae0" stroke="#446" /><path d="M6 1h9v8H6z" fill="#6a9cf0" stroke="#2438a0" /></g>,
  <g key="7"><rect x="2" y="2" width="12" height="12" fill="#f2f5ff" stroke="#3a52b4" strokeWidth="2" /><rect x=".5" y=".5" width="15" height="15" stroke="#3a52b4" strokeDasharray="1 1" /><path d="M6 5v4q0 2 2 2t2-2V5" stroke="#3a52b4" strokeWidth="1.500" /></g>,
  <g key="8"><circle cx="7.500" cy="7.500" r="7" fill="#9cc8f0" stroke="#4a7cb4" /><path d="M2 4q4-3 6 0L6 8 3 9z" fill="#fff" /><path d="M6 6h6v3h3l-4 6-5-4h3z" fill="#5cc030" stroke="#206010" /></g>,
  <g key="9"><rect x="1" y="1" width="14" height="14" rx="2" fill="#e8f2fa" stroke="#2876b8" strokeWidth="2" /><path d="M6 4h4v4h3l-5 5-5-5h3z" fill="#222" /></g>,
];

function VBox() {
  return (
    <div className={`flex w-[683px] shrink-0 flex-col border-l border-t border-[#c6c6c6] bg-[#ebebeb] ${segoe}`}>
      <div className="flex h-[29px] shrink-0 items-start pl-[9px]">
        <I className="mt-[6px] size-[16px]"><path d="M0 0h16v16H0z" fill="#e8c070" stroke="#777" /><path d="M1 1h7l-5 4z" fill="#334" /><path d="M2 6l5 3 8-7v3L8 12 2 9z" fill="#e0602c" /><path d="M2 15l5-6 8 4" stroke="#fbe9a0" strokeWidth="2" /></I>
        <T className="ml-[180px] mt-[3px] w-[271px] text-[15px] text-[#222]">LDAP [Corriendo] - Oracle VM VirtualBox</T>
        <div className="ml-[110px] mt-[12px] h-[2px] w-[8px] bg-[#222]" />
        <div className="ml-[18px] mt-[6px] h-[8px] w-[10px] border border-t-2 border-[#222]" />
        <div className="ml-[8px] flex h-[19px] w-[45px] items-center justify-center bg-[#bcbcbc]"><XI className="size-[8px]" c="#fff" w={1.700} /></div>
      </div>
      <div className="ml-[6px] flex w-[669px] flex-1 flex-col border border-[#d2d2d2]">
        <div className="flex h-[21px] shrink-0 items-center bg-[#f5f6f8] pl-[8px] text-[12px] text-[#9a9a9a]">
          <T className="w-[41px]">Archivo</T><T className="ml-[16px] w-[47px]">Máquina</T><T className="ml-[16px] w-[16px]">Ver</T><T className="ml-[16px] w-[40px]">Entrada</T><T className="ml-[16px] w-[63px]">Dispositivos</T><T className="ml-[16px] w-[34px]">Ayuda</T>
        </div>
        <div className={`flex h-[24px] shrink-0 items-center bg-linear-to-b from-[#5a5852] to-[#3c3b37] pb-px pl-[6px] ${ubuntu} text-[14px] text-[#dfdbd2]`}>
          <T className="w-[282px] font-bold">phpLDAPadmin (1.2.2) - - Mozilla Firefox</T>
          <I className="ml-[98px] h-[12px] w-[18px]" vb="0 0 18 12"><path d="M0 0h18v12H0z" fill="#dfdbd2" /><path d="M1 1l8 6 8-6M1 11l6-5M17 11l-6-5" stroke="#45443f" strokeWidth="1.200" /></I>
          <I className="ml-[13px] h-[12px] w-[21px]" vb="0 0 21 12"><rect x="1" y="1" width="17" height="10" rx="2" stroke="#b0ada5" strokeWidth="1.600" /><path d="M3 3h5v6H3z" fill="#dfdbd2" /><path d="M19 4h2v4h-2z" fill="#b0ada5" /></I>
          <I className="ml-[12px] h-[16px] w-[18px]" vb="0 0 18 16"><path d="M3.500 12V6H0L5 0l5 6H6.500v6zM11.500 3v7H8l5 6 5-6h-3.500V3z" fill="#dfdbd2" /></I>
          <I className="ml-[13px] h-[16px] w-[20px]" vb="0 0 20 16"><path d="M0 5h3l5-4v14l-5-4H0z" fill="#dfdbd2" /><path d="M10 5q2 3 0 6" stroke="#dfdbd2" strokeWidth="1.500" /><path d="M13 3q3 5 0 10M16 1q5 7 0 14" stroke="#8f8d86" strokeWidth="1.500" /></I>
          <T className="ml-[13px] w-[36px]">20:42</T>
          <I className="ml-[12px] h-[14px] w-[13px]" vb="0 0 13 14"><path d="M6.500 0q4 0 3.500 5-.5 2-1.500 3v1.500q4 .5 4.500 4.500H0q.5-4 4.500-4.500V8Q3.500 7 3 5 2.500 0 6.500 0z" fill="#dfdbd2" /></I>
          <T className="ml-[5px] w-[49px]">alumno</T>
          <I className="ml-[14px] size-[16px]"><path d="M5.500 3.500a5 5 0 105 0" stroke="#dfdbd2" strokeWidth="2" /><path d="M8 0v7M0 8h3M13 8h3M2.300 2.300l2 2M13.700 2.300l-2 2M2.300 13.700l2-2M13.700 13.700l-2-2M8 13v3" stroke="#dfdbd2" strokeWidth="2" /></I>
        </div>
        <div className={`flex h-[623px] shrink-0 ${ubuntu}`}><Launcher /><Firefox /></div>
        <div className="flex flex-1 items-center bg-[#f0f0f0] pl-[362px] text-[12px] text-black">
          {statusIcons.map((s, n) => <I key={n} className="mr-[6px] size-[15px]">{s}</I>)}
          <T className="w-[75px]">CTRL DERECHA</T>
          <I className="ml-[10px] mt-[8px] size-[9px]" vb="0 0 9 9"><path d="M7 0h2v2H7zM3.500 3.500h2v2h-2zM7 3.500h2v2H7zM0 7h2v2H0zM3.500 7h2v2h-2zM7 7h2v2H7z" fill="#b5b5b5" /></I>
        </div>
      </div>
      <div className="h-[7px] shrink-0" />
    </div>
  );
}

/* ---------- taskbar ---------- */

const btn = "flex h-[39px] w-[60px] shrink-0 items-center justify-center border border-[#8a8a8a] bg-[#aeaeae] shadow-[inset_0_0_0_1px_#bdbdbd]";

function Taskbar() {
  return (
    <div className={`flex h-[40px] shrink-0 items-center border-t border-[#8c8c8c] bg-linear-to-b from-[#a5a5a5] to-[#9b9b9b] ${segoe}`}>
      <I className="ml-[11px] h-[28px] w-[28px]" vb="0 0 28 28"><path d="M0 4l12-2v11.500H0zM13 2l15-2v13.500H13zM0 14.500h12V26L0 24zM13 14.500h15V28l-15-2z" fill="#fff" stroke="#888" strokeWidth=".5" /></I>
      <I className="ml-[27px] size-[30px]" vb="0 0 30 30"><path d="M0 0h30v30H0z" fill="#008a00" /><path d="M4 11l21-2v16L5 24z" fill="#fff" /><path d="M10 11q0-8 4-7t4 6M15 9q1-6 4-4 2 1 2 5" stroke="#fff" strokeWidth="1.300" /><path d="M8 14l5-1v4H8zM14 13l6-1v5h-6zM8 18h5v4H8zM14 18h6v5l-6-1z" fill="#008a00" /></I>
      <I className="ml-[33px] h-[30px] w-[28px]" vb="0 0 28 30"><ellipse cx="14" cy="15" rx="13.500" ry="14.500" fill="#d41c24" /><ellipse cx="14" cy="15" rx="10" ry="13" fill="#ee4d52" /><ellipse cx="14" cy="15" rx="5" ry="11.500" fill="#a8a8a8" stroke="#a80f18" /></I>
      <I className="ml-[34px] h-[25px] w-[28px]" vb="0 0 28 25"><path d="M0 2h18l4 2v20H6l-6-3z" fill="#6fa9d0" stroke="#3a7cac" /><path d="M2 1h18v20H2z" fill="#9cc8e4" stroke="#5a98c4" /><circle cx="12" cy="12" r="9" fill="#ee7a1c" stroke="#fff" strokeWidth=".6" /><path d="M9 6l9 6-9 6z" fill="#fff" /></I>
      <I className="ml-[32px] h-[31px] w-[31px]" vb="0 0 31 31"><path d="M5 1h22l-2 8H0z" fill="#fbe4d8" stroke="#d8481c" strokeWidth="1.500" /><path d="M1 8v17l6-2V4z" fill="#f9c6b0" stroke="#d8481c" /><path d="M6 6l25 3-3 21-22-4z" fill="#fff" stroke="#ccc" /><path d="M8 10l20 1-1 14H8z" fill="#e2481c" /><path d="M15 13.500h-5v8h5M10 17.500h5" stroke="#fff" strokeWidth="2" /><circle cx="22" cy="17.500" r="4" fill="#fff" /><path d="M22 17.500v-5l5 3z" fill="#e2481c" /></I>
      <div className="ml-[17px] flex gap-[2px]">
        <div className={btn}><I className="size-[30px]" vb="0 0 30 30"><circle cx="15" cy="15" r="14.500" fill="#fbd03c" /><path d="M15 15L2.400 7.700A14.500 14.500 0 0127.600 7.700H15z" fill="#dd4a3c" /><path d="M15 15l-3.800 14A14.500 14.500 0 012.400 7.700L8.700 18.600z" fill="#3aa350" /><path d="M8.700 18.600L15 21.900 11 29q-1 0 4 .5l6.300-10.900z" fill="#3aa350" /><path d="M15 29.500A14.500 14.500 0 0027.600 7.700H15l6.300 10.900z" fill="#fbd03c" /><circle cx="15" cy="15" r="6.600" fill="#fff" /><circle cx="15" cy="15" r="5.300" fill="#4a86ec" /></I></div>
        <div className={btn}><I className="size-[31px]" vb="0 0 31 31"><path d="M7 1h22v7L0 25 4 4z" fill="#e8eef8" stroke="#234a9c" strokeWidth="1.500" /><path d="M5 3l8-1-6 23-7 2z" fill="#2f5cb4" /><path d="M9 5l20 1 2 24-22-5z" fill="#f8f8fa" stroke="#bbb" /><path d="M10 10l2 10 3-7 3 7 2-10" stroke="#234a9c" strokeWidth="2" /><path d="M21 11h6M21 14h6M21 17h6M12 22h14" stroke="#234a9c" strokeWidth="1.500" /></I></div>
        <div className={btn}><I className="-ml-[8px] h-[31px] w-[27px]" vb="0 0 27 31"><path d="M6 20h15l-2 7-6 4-6-4z" fill="#8898b8" stroke="#556" /><path d="M14 0l12 6v14l-12 8-12-8V6z" fill="#12284e" stroke="#d8e4f4" /><path d="M2 6l12 6 12-6M14 12v15" stroke="#e0ecf8" strokeWidth="1.800" /><path d="M5 6l9-4 8 4-8 4z" fill="#3c5c90" /></I><div className="-mr-[13px] ml-[13px] h-[37px] w-px bg-[#8a8a8a]" /></div>
        <div className={btn}><I className="size-[31px]" vb="0 0 31 31"><rect y="4" width="31" height="21" rx="2" fill="#3a94d0" stroke="#1c6ca8" /><circle cx="8" cy="12" r="4" stroke="#fff" strokeWidth="1.500" /><path d="M8 12V6l4 2v4z" fill="#f49a28" /><path d="M16 8h4v5h-4zM23 8h4v5h-4zM16 16h4v2h-4zM23 16h4v2h-4z" stroke="#d8f0ff" /><path d="M4 20h3M9 20h2" stroke="#f49a28" strokeWidth="2" /><circle cx="15.500" cy="26" r="5" fill="#d8d8d8" stroke="#888" /></I></div>
        <div className={btn}><I className="h-[25px] w-[30px]" vb="0 0 30 25"><path d="M0 0h30v25H0z" fill="#000" stroke="#888" /><path d="M0 0h30v3H0z" fill="#dcdcdc" /><path d="M7 7H4v5h3M9 8v1M9 11v1M11 7l3 5M16 12h9" stroke="#fff" /></I></div>
        <div className={btn}><I className="size-[32px]" vb="0 0 32 32"><path d="M2 4h14v4h15v20H2z" fill="#f0d880" stroke="#c8a848" /><path d="M5 2h3v3H5z" fill="#1eaa4a" /><path d="M15 4h3v3h-3z" fill="#d8382c" /><path d="M22 6h4v3h-4z" fill="#2c80d0" /><path d="M1 10h29l-2 20H2z" fill="#f7e69c" /><path d="M5 31v-9q0-3 3-3h15q3 0 3 3v9h-5v-7H10v7z" fill="#8ed2ec" stroke="#4aa4cc" /></I></div>
      </div>
      <div className="ml-auto flex w-[327px] items-center">
        <I className="size-[16px]"><path d="M0 11h2v3H0zM3.500 9h2v5h-2zM7 7h2v7H7zM10.500 4h2v10h-2zM14 1h2v13h-2z" fill="#fff" stroke="#666" strokeWidth=".4" /></I>
        <I className="ml-[8px] size-[16px]"><path d="M2 11Q-1 7 3 5q2-4 6-3 4-1 5 3l1 4-7 4z" fill="#f2f2f2" stroke="#666" /><path d="M11 6l5 9H6z" fill="#f8c01c" stroke="#a87808" strokeWidth=".6" /><path d="M11 9v3M11 13v1" stroke="#222" /></I>
        <I className="ml-[8px] size-[16px]"><path d="M0 2.500l7-1v6H0zM8 1.300L16 0v7.500H8zM0 8.500h7v6l-7-1zM8 8.500h8V16l-8-1.300z" fill="#fff" stroke="#777" strokeWidth=".4" /></I>
        <I className="ml-[8px] size-[16px]"><path d="M0 0h16v16H0z" fill="#26302c" /><path d="M1 8q4-5 10-3 2 2 3 3-5 5-9 3z" stroke="#76b900" strokeWidth="1.600" /><circle cx="7" cy="8" r="2" fill="#76b900" /><path d="M13 6h2v6h-2zM13 13h2v2h-2z" fill="#f8d01c" /></I>
        <I className="ml-[8px] size-[16px]"><path d="M1 0v16" stroke="#fff" strokeWidth="1.600" /><path d="M2 2h6l2 1h5v7H2z" fill="#f4f4f4" stroke="#666" strokeWidth=".5" /><circle cx="11" cy="11" r="4.800" fill="#d8261c" /><path d="M9 9l4 4m0-4l-4 4" stroke="#fff" strokeWidth="1.500" /></I>
        <I className="ml-[9px] size-[15px]"><path d="M2 3h13l-1 8H1z" fill="#4a7cc0" stroke="#e0e8f4" /><path d="M4 6h8M4 8h5" stroke="#fff" /></I>
        <I className="ml-[14px] h-[16px] w-[9px]" vb="0 0 9 16"><rect x="1" y="2" width="7" height="13" fill="#777" stroke="#fff" strokeWidth="1.400" /><path d="M3 0h3v2H3zM3 5h3v2H3zM3 9h3v4H3z" fill="#fff" /></I>
        <I className="ml-[9px] size-[16px]"><circle cx="8" cy="8" r="8" fill="#ff9a0c" /><circle cx="8" cy="8" r="3.500" stroke="#fff" strokeWidth="2" /><path d="M11.500 8v4" stroke="#fff" strokeWidth="2" /></I>
        <I className="ml-[10px] h-[14px] w-[13px]" vb="0 0 13 14"><path d="M0 4h3l4-4v14l-4-4H0z" fill="#f4f4f4" stroke="#666" strokeWidth=".6" /><path d="M9 4q2 3 0 6M11 2q3 5 0 10" stroke="#fff" /></I>
        <I className="ml-[9px] size-[16px]"><path d="M1 1h14v9H1z" fill="#888" stroke="#333" /><path d="M1 14h5M10 14h5" stroke="#333" strokeWidth="2" /></I>
        <div className="ml-[18px] flex flex-col items-center text-[12px] leading-[18px] text-white"><T className="w-[28px]">20:42</T><T className="w-[59px]">02/06/2016</T></div>
      </div>
    </div>
  );
}

export default function App() {
  return (
    <div className="flex h-[768px] w-[1366px] flex-col overflow-hidden bg-[#ebebeb]">
      <div className="flex h-[728px] shrink-0"><Chrome /><VBox /></div>
      <Taskbar />
    </div>
  );
}
